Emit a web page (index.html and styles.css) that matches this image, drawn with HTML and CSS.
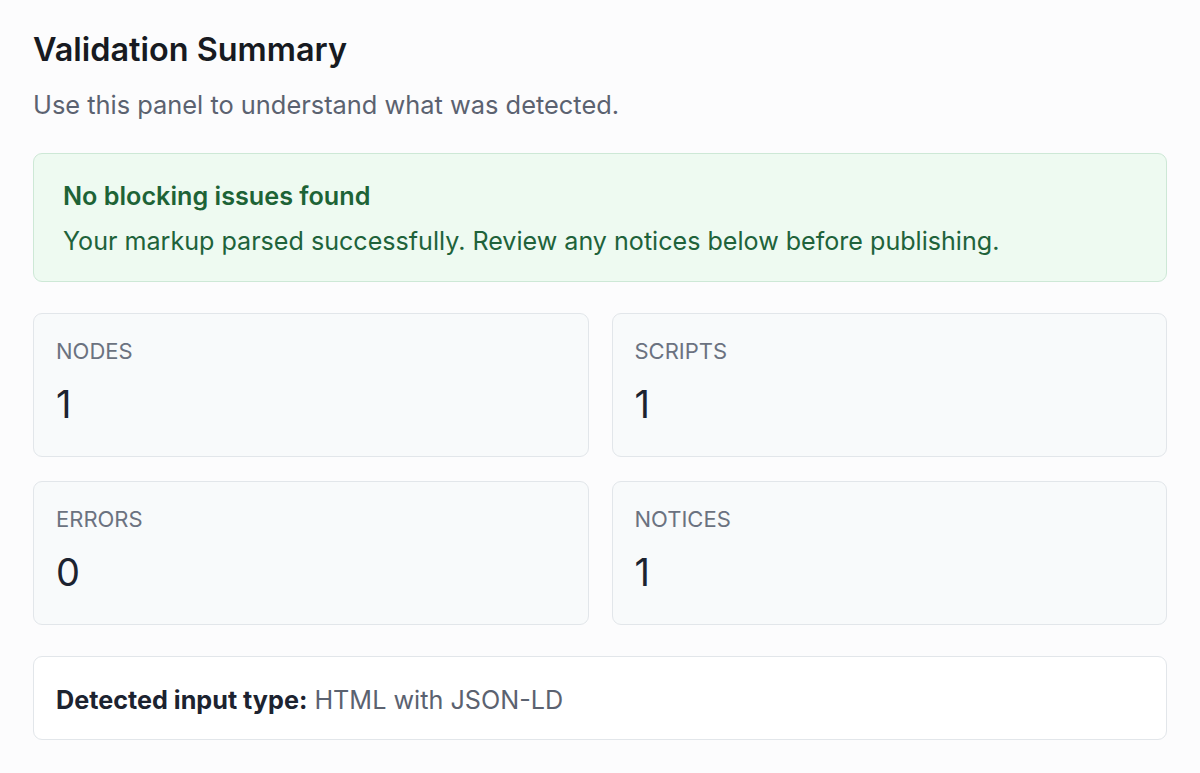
FILE: index.html
```html
<!DOCTYPE html>
<html lang="en">
<head>
<meta charset="utf-8">
<title>Validation Summary</title>
<link rel="stylesheet" href="styles.css">
</head>
<body>
<main class="page">
  <h1 class="title">Validation Summary</h1>
  <p class="subtitle">Use this panel to understand what was detected.</p>

  <section class="status">
    <h2 class="status-title">No blocking issues found</h2>
    <p class="status-text">Your markup parsed successfully. Review any notices below before publishing.</p>
  </section>

  <section class="stats">
    <div class="stat">
      <div class="stat-label">NODES</div>
      <div class="stat-value">1</div>
    </div>
    <div class="stat">
      <div class="stat-label">SCRIPTS</div>
      <div class="stat-value">1</div>
    </div>
    <div class="stat">
      <div class="stat-label">ERRORS</div>
      <div class="stat-value">0</div>
    </div>
    <div class="stat">
      <div class="stat-label">NOTICES</div>
      <div class="stat-value">1</div>
    </div>
  </section>

  <section class="detected">
    <p class="detected-text"><strong>Detected input type:</strong> HTML with JSON-LD</p>
  </section>
</main>
</body>
</html>
```

FILE: styles.css
```css
html, body {
  margin: 0;
  padding: 0;
  background: #fcfcfd;
}

body {
  font-family: Inter, "Noto Sans", "Liberation Sans", sans-serif;
  color: #1f2937;
}

.page {
  display: flex;
  flex-direction: column;
  padding: 32px 33px;
}

.title {
  margin: 0;
  font-size: 32.4px;
  line-height: 36px;
  font-weight: 600;
  color: #171a21;
}

.subtitle {
  margin: 19px 0 0;
  font-size: 25.4px;
  line-height: 36px;
  color: #5b6270;
}

.status {
  margin-top: 30px;
  padding: 24px 29px 22px;
  background: #eefaf1;
  border: 1px solid #cde8d6;
  border-radius: 9px;
}

.status-title {
  margin: 0;
  font-size: 25.2px;
  line-height: 36px;
  font-weight: 600;
  color: #1d6336;
}

.status-text {
  margin: 9px 0 0;
  font-size: 25.1px;
  line-height: 36px;
  color: #20623a;
}

.stats {
  margin-top: 31px;
  display: grid;
  grid-template-columns: 1fr 1fr;
  gap: 24px 23px;
}

.stat {
  padding: 22px 22px 30px;
  background: #f8fafb;
  border: 1px solid #e2e6ea;
  border-radius: 9px;
}

.stat-label {
  font-size: 22px;
  line-height: 30px;
  color: #6b7280;
}

.stat-value {
  margin-top: 16px;
  font-size: 38px;
  line-height: 44px;
  color: #1c2330;
}

.detected {
  margin-top: 31px;
  padding: 25px 22px 21px;
  background: #ffffff;
  border: 1px solid #e2e6ea;
  border-radius: 9px;
}

.detected-text {
  margin: 0;
  font-size: 25.2px;
  line-height: 36px;
  color: #5b6270;
}

.detected-text strong {
  font-weight: 700;
  color: #1c2330;
}
```
